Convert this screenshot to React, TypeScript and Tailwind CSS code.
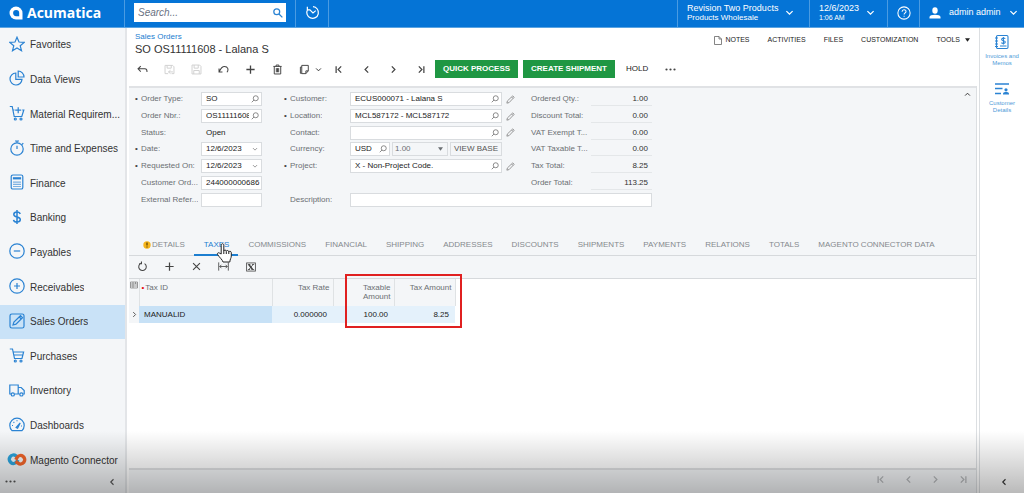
import { useState } from "react";
import type { ReactNode } from "react";

type IconProps = { className?: string; children: ReactNode; box?: string; sw?: number };

function Icon({ className = "size-3", children, box = "0 0 16 16", sw = 1.2 }: IconProps) {
  return (
    <svg viewBox={box} className={`shrink-0 ${className}`} fill="none" stroke="currentColor" strokeWidth={sw} aria-hidden="true">
      {children}
    </svg>
  );
}

const icons: Record<string, ReactNode> = {
  star: <path d="M8 1.2l2 4.8 5.2.4-4 3.3 1.3 5L8 12l-4.5 2.7 1.3-5-4-3.3L6 6z" />,
  pie: (
    <>
      <path d="M6.8 3A6 6 0 1 0 13 9.4H6.8z" />
      <path d="M9.2 1v6H15a6 6 0 0 0-5.8-6z" />
    </>
  ),
  cartPlus: (
    <>
      <path d="M0.8 1.5h2.4l2 10h7.6l2-6.5h-1.6M4 5h1.5" />
      <circle cx="6.3" cy="14" r="1" />
      <circle cx="12" cy="14" r="1" />
      <path d="M9.2 2.2v6M6.2 5.2h6" />
    </>
  ),
  timer: (
    <>
      <circle cx="8" cy="9" r="6.2" />
      <path d="M8 2.8V1M6 1h4M8 9V5.8M13 4.5l1.3-1.3" />
    </>
  ),
  calc: (
    <>
      <rect x="2.2" y="1" width="11.6" height="14" rx="1.6" />
      <path d="M4.5 3.8h7v1h-7z" />
      <path d="M5 7.5v5.5M7 7.5v5.5M9 7.5v5.5M11 7.5v5.5" strokeDasharray="1.2 1" />
    </>
  ),
  dollar: <path d="M8 1v14M11.200 5C10.800 3.600 9.600 3 8 3c-1.900 0-3.200.9-3.200 2.500 0 3.500 6.500 1.700 6.500 5.100 0 1.600-1.500 2.500-3.300 2.500s-3.200-.8-3.500-2.300" strokeWidth="1.500" />,
  minus: (
    <>
      <circle cx="8" cy="8" r="7.2" />
      <path d="M4.8 8h6.4" />
    </>
  ),
  plus: (
    <>
      <circle cx="8" cy="8" r="7.2" />
      <path d="M5 8h6M8 5v6" />
    </>
  ),
  edit: (
    <>
      <rect x="1" y="1" width="14" height="14" rx="1.8" />
      <path d="M4 12l.9-3 6.6-6.3 2 2L7 11.2zM10.3 4l2 2" />
    </>
  ),
  cart: (
    <>
      <path d="M.8 2h2.700l2 9.500h7.500l1.600-6.500H4.200M5 8h9" />
      <circle cx="6.300" cy="14" r="1" />
      <circle cx="12" cy="14" r="1" />
    </>
  ),
  truck: (
    <>
      <path d="M2.2 12H.8V3h8.4v9H5.4M9.2 12V5.5h3l3 3V12h-1M10.5 12H9.2" />
      <circle cx="3.8" cy="12.4" r="1.6" />
      <circle cx="12.4" cy="12.4" r="1.6" />
    </>
  ),
  gauge: (
    <>
      <path d="M3 13.6a7.2 7.2 0 1 1 10 0z" />
      <path d="M7.2 10.5l4-4.5-2.6 5.2z" />
      <path d="M3 8.5h1M4.5 5l.8.7M8 3.2v1M12 9h1" />
    </>
  ),
};

const navItems = [
  { label: "Favorites", icon: "star" },
  { label: "Data Views", icon: "pie" },
  { label: "Material Requirem...", icon: "cartPlus" },
  { label: "Time and Expenses", icon: "timer" },
  { label: "Finance", icon: "calc" },
  { label: "Banking", icon: "dollar" },
  { label: "Payables", icon: "minus" },
  { label: "Receivables", icon: "plus" },
  { label: "Sales Orders", icon: "edit" },
  { label: "Purchases", icon: "cart" },
  { label: "Inventory", icon: "truck" },
  { label: "Dashboards", icon: "gauge" },
  { label: "Magento Connector", icon: "magento" },
];

function Chevron({ dir, className = "size-2", bar = false }: { dir: "left" | "right" | "down" | "up"; className?: string; bar?: boolean }) {
  const d = {
    left: "M11 2.5L5.5 8l5.5 5.5",
    right: "M5 2.5L10.500 8 5 13.500",
    down: "M2.500 5.500L8 11l5.500-5.500",
    up: "M2.500 10.500L8 5l5.500 5.500",
  }[dir];
  return (
    <Icon className={className} sw={2.2}>
      <path d={d} />
      {bar && <path d={dir === "left" ? "M2 2v12" : "M14 2v12"} />}
    </Icon>
  );
}

function Lens({ className = "size-2" }: { className?: string }) {
  return (
    <Icon className={className} sw={1.7}>
      <circle cx="9.500" cy="6.500" r="5" />
      <path d="M6 10l-4.500 4.500" />
    </Icon>
  );
}

function NavIcon({ name }: { name: string }) {
  if (name === "magento") {
    return (
      <svg viewBox="0 0 20 13" className="h-[13px] w-5 shrink-0" fill="none" strokeWidth="3.400" aria-hidden="true">
        <path d="M11.500 4.500L9 2.900a4.200 4.200 0 1 0 .8 5.900l1.200-2" stroke="#2ba3dc" />
        <path d="M8.500 8.500l2.500 1.600a4.200 4.200 0 1 0-.8-5.900L8.800 6.800" stroke="#f0642a" />
      </svg>
    );
  }
  return <Icon className="size-4 text-[#2b83d3]">{icons[name]}</Icon>;
}

function TopBar() {
  return (
    <header className="flex h-7 shrink-0 items-stretch border-b border-[#5ba4e2] bg-[#0574d6] text-white">
      <a href="#home" className="flex w-[125px] shrink-0 items-center gap-1 border-r border-[#4a9be2] pb-[2px] pl-[9px]">
        <svg viewBox="0 0 14 14" className="size-[14px]" aria-hidden="true">
          <path d="M7 .5a6.500 6.500 0 0 1 6.500 6.500v6.500H7A6.500 6.500 0 0 1 7 .5z" fill="#fff" />
          <path d="M7.200 4a3 3 0 0 1 3 3v3.200h-3a3.100 3.100 0 0 1 0-6.200z" fill="#0574d6" />
        </svg>
        <span className="font-['Open_Sans','Noto_Sans',sans-serif] text-[14px] leading-5 font-bold">Acumatica</span>
      </a>
      <div className="flex w-[171px] items-center border-r border-[#4a9be2] pb-[2px] pl-[9px]">
        <label className="flex h-[19px] w-[152px] items-center bg-white pr-[3px] text-[#2b83d3]">
          <input aria-label="Search" placeholder="Search..." className="min-w-0 flex-1 px-1 text-[10px] text-gray-700 italic outline-none placeholder:text-gray-500" />
          <Icon className="size-[10px]" sw={2}>
            <circle cx="6" cy="6" r="4.700" />
            <path d="M9.500 9.500l5.500 5.500" />
          </Icon>
        </label>
      </div>
      <button aria-label="Recent" className="flex w-[33px] items-center justify-center border-r border-[#4a9be2] pb-[2px]">
        <Icon className="size-[15px]" sw={1.300}>
          <path d="M8.500 1.800a6.200 6.200 0 1 1-5.700 3M2.500 1.800v3.400h3.200M5 5l3.500 3.500L11.500 6" />
        </Icon>
      </button>
      <div className="flex-1" />
      <button className="flex w-[132px] items-center border-l border-[#4a9be2] pb-[2px] pl-[9px] text-left">
        <span>
          <span className="block text-[9px] leading-[10px]">Revision Two Products</span>
          <span className="block text-[8px] leading-[10px]">Products Wholesale</span>
        </span>
        <Chevron dir="down" className="ml-[7px] size-[9px]" />
      </button>
      <button className="flex w-[78px] items-center border-l border-[#4a9be2] pb-[2px] pl-[9px] text-left">
        <span>
          <span className="block text-[9px] leading-[10px]">12/6/2023</span>
          <span className="block text-[7px] leading-[10px]">1:06 AM</span>
        </span>
        <Chevron dir="down" className="ml-[7px] size-[9px]" />
      </button>
      <button aria-label="Help" className="flex w-8 items-center justify-center border-l border-[#4a9be2] pb-[2px]">
        <Icon className="size-[14px]">
          <circle cx="8" cy="8" r="7" />
          <path d="M5.800 6.500c0-3 4.500-2.800 4.500-.3 0 1.600-2.200 1.600-2.200 3.500M8.100 11v1.400" />
        </Icon>
      </button>
      <button className="flex w-[105px] items-center border-l border-[#4a9be2] pb-[2px] pl-[9px]">
        <svg viewBox="0 0 12 12" className="size-3" fill="currentColor" aria-hidden="true">
          <ellipse cx="6" cy="3.500" rx="2.700" ry="3.200" />
          <path d="M.5 11.500V10c0-1.500 2.500-2.300 5.500-2.300s5.500.8 5.500 2.300v1.500z" />
        </svg>
        <span className="ml-2 text-[9px]">admin admin</span>
        <Chevron dir="down" className="ml-2 size-[9px]" />
      </button>
    </header>
  );
}

function Sidebar() {
  return (
    <nav className="flex w-[125px] shrink-0 flex-col bg-[#f4f6f8]">
      {navItems.map((n) => (
        <a
          key={n.label}
          href={"#" + n.label}
          className={`flex flex-1 items-center gap-[5px] text-[10px] text-[#333] ${n.label === "Sales Orders" ? "bg-[#c9e2f7]" : ""}`}
        >
          <span className="flex w-[25px] justify-end pb-[3px] pl-[7px]">
            <span className="flex w-4 justify-center">
              <NavIcon name={n.icon} />
            </span>
          </span>
          <span className="truncate leading-4">{n.label}</span>
        </a>
      ))}
      <div className="flex h-[15px] items-start justify-between pr-[9px] pl-[5px] text-[#555]">
        <button aria-label="More" className="flex h-2 items-center">
          <Dots />
        </button>
        <button aria-label="Collapse menu" className="flex h-2 items-center">
          <Chevron dir="left" />
        </button>
      </div>
    </nav>
  );
}

function Dots() {
  return (
    <svg viewBox="0 0 11 3" className="h-[3px] w-[11px]" fill="currentColor" aria-hidden="true">
      <circle cx="1.500" cy="1.500" r="1.100" />
      <circle cx="5.500" cy="1.500" r="1.100" />
      <circle cx="9.500" cy="1.500" r="1.100" />
    </svg>
  );
}

function ToolButton({ label, children, faded = false }: { label: string; children: ReactNode; faded?: boolean }) {
  return (
    <button aria-label={label} disabled={faded} className={`flex h-5 w-[27px] shrink-0 items-center justify-center ${faded ? "text-[#d0d0d0]" : "text-[#444]"}`}>
      {children}
    </button>
  );
}

function PageHead() {
  return (
    <div className="h-[58px] shrink-0">
      <div className="flex justify-between">
        <div className="pt-1 pl-[6px]">
          <a href="#orders" className="block text-[8px] leading-[10px] text-[#1c7ed0]">
            Sales Orders
          </a>
          <h1 className="text-[11px] leading-[14px] text-[#333]">SO OS11111608 - Lalana S</h1>
        </div>
        <div className="flex h-6 items-center gap-[18px] pr-[9px] text-[7px] text-[#222]">
          <button className="flex items-center gap-[3px]">
            <svg viewBox="0 0 8 9" className="h-[9px] w-2" fill="none" stroke="#666" strokeWidth=".8" aria-hidden="true">
              <path d="M.5.5h4.500l2.500 2.500v5.500h-7zM5 .5V3h2.500" />
            </svg>
            NOTES
          </button>
          <button>ACTIVITIES</button>
          <button>FILES</button>
          <button>CUSTOMIZATION</button>
          <button className="flex items-center gap-[5px]">
            TOOLS
            <Caret />
          </button>
        </div>
      </div>
      <div className="flex items-center pt-[3px]">
        <ToolButton label="Back">
          <Icon className="size-[11px]" sw={1.500}>
            <path d="M5.500 3L1.500 7l4 4M1.500 7h10c2 0 3 1.200 3 3.500v1" />
          </Icon>
        </ToolButton>
        <ToolButton label="Save and close" faded>
          <Icon className="size-[11px]" sw={1.400}>
            <path d="M6 14H1.500V2h11L14.500 4v10H11M4.500 2v4h6V2M9.500 9l-3 2.500 3 2.500M6.500 11.500H13" />
          </Icon>
        </ToolButton>
        <ToolButton label="Save" faded>
          <Icon className="size-[11px]" sw={1.400}>
            <path d="M1.500 1.500h11l2 2v11h-13zM4.500 1.500v4.500h6V1.500M4 14.500V9.500h8v5" />
          </Icon>
        </ToolButton>
        <ToolButton label="Undo">
          <Icon className="size-[11px]" sw={1.500}>
            <path d="M1.500 6.500v5h5M2 11C4 6 6.500 3.500 9.500 3.500c5 0 6.300 5 3.500 8.500" />
          </Icon>
        </ToolButton>
        <ToolButton label="Add">
          <Icon className="size-[11px]" sw={1.900}>
            <path d="M8 2v12M2 8h12" />
          </Icon>
        </ToolButton>
        <ToolButton label="Delete">
          <Icon className="size-[11px]" sw={1.400}>
            <path d="M2 3.500h12M6 3.500v-2h4v2M3.300 3.500v11h9.400v-11M6.300 6v6M8 6v6M9.700 6v6" />
          </Icon>
        </ToolButton>
        <ToolButton label="Copy and paste">
          <Icon className="size-[11px]" sw={1.400}>
            <path d="M4 2h9.500v8L10 14H4zM13.500 10H10v4M4 4.500H2v9h2" />
          </Icon>
        </ToolButton>
        <button aria-label="Copy options" className="-ml-1 flex h-5 w-2 items-center justify-center text-[#333]">
          <Chevron dir="down" className="size-[7px]" />
        </button>
        <span className="w-1" />
        <ToolButton label="First record"><Chevron dir="left" bar className="size-[9px]" /></ToolButton>
        <ToolButton label="Previous record"><Chevron dir="left" className="size-[9px]" /></ToolButton>
        <ToolButton label="Next record"><Chevron dir="right" className="size-[9px]" /></ToolButton>
        <ToolButton label="Last record"><Chevron dir="right" bar className="size-[9px]" /></ToolButton>
        <button className="ml-px h-[18px] w-[83px] bg-[#1f9743] text-[8px] font-bold whitespace-nowrap text-white">QUICK PROCESS</button>
        <button className="ml-[5px] h-[18px] w-[92px] bg-[#1f9743] text-[8px] font-bold whitespace-nowrap text-white">CREATE SHIPMENT</button>
        <button className="ml-[11px] text-[8px] text-[#222]">HOLD</button>
        <button aria-label="More actions" className="ml-[17px] text-[#444]">
          <Dots />
        </button>
      </div>
    </div>
  );
}

function Caret() {
  return (
    <svg viewBox="0 0 6 4" className="h-1 w-[5px] shrink-0" fill="currentColor" aria-hidden="true">
      <path d="M0 0h6L3 4z" />
    </svg>
  );
}

const rowStart = ["row-start-1", "row-start-2", "row-start-3", "row-start-4", "row-start-5", "row-start-6", "row-start-7"];

function FieldLabel({ id, text, required }: { id: string; text: string; required?: boolean }) {
  return (
    <label htmlFor={id} className="flex w-[66px] shrink-0 items-center text-[#6b6f73]">
      <span className="w-[6px] text-[#444]">{required ? "•" : ""}</span>
      <span className="truncate">{text}</span>
    </label>
  );
}

function FieldBox({ id, value, icon, className = "flex-1" }: { id: string; value: string; icon?: "lens" | "down"; className?: string }) {
  const [text, setText] = useState(value);
  return (
    <span className={`flex h-[14px] min-w-0 items-center border border-[#d9dcdf] bg-white text-[#222] ${className}`}>
      <input id={id} value={text} onChange={(e) => setText(e.target.value)} className="h-3 min-w-0 flex-1 pl-1 outline-none" />
      {icon === "lens" && <Lens className="mx-[2px] size-2 text-[#777]" />}
      {icon === "down" && <Chevron dir="down" className="mx-[3px] size-[6px] text-[#888]" />}
    </span>
  );
}

type Field = { label: string; value: string; required?: boolean; icon?: "lens" | "down" };

const orderFields: Field[] = [
  { label: "Order Type:", value: "SO", required: true, icon: "lens" },
  { label: "Order Nbr.:", value: "OS11111608", icon: "lens" },
  { label: "Status:", value: "Open" },
  { label: "Date:", value: "12/6/2023", required: true, icon: "down" },
  { label: "Requested On:", value: "12/6/2023", required: true, icon: "down" },
  { label: "Customer Ord...", value: "244000000686" },
  { label: "External Refer...", value: "" },
];

const customerFields: Field[] = [
  { label: "Customer:", value: "ECUS000071 - Lalana S", required: true },
  { label: "Location:", value: "MCL587172 - MCL587172", required: true },
  { label: "Contact:", value: "" },
  { label: "Currency:", value: "USD" },
  { label: "Project:", value: "X - Non-Project Code.", required: true },
];

const totals = [
  ["Ordered Qty.:", "1.00"],
  ["Discount Total:", "0.00"],
  ["VAT Exempt T...", "0.00"],
  ["VAT Taxable T...", "0.00"],
  ["Tax Total:", "8.25"],
  ["Order Total:", "113.25"],
];

function OrderForm() {
  return (
    <form className="flex h-[148px] shrink-0 items-start justify-between border-t-2 border-[#e0e2e5] pt-[3px] pl-[6px] text-[8px]">
      <div className="grid h-[117px] grid-cols-[149px_246px_122px] grid-rows-7 items-center">
        {orderFields.map((f, i) => (
          <div key={f.label} className={`col-start-1 flex items-center pr-[22px] ${rowStart[i]}`}>
            <FieldLabel id={"order-" + i} text={f.label} required={f.required} />
            {f.label === "Status:" ? (
              <output id={"order-" + i} className="pl-[5px] text-[#222]">{f.value}</output>
            ) : (
              <FieldBox id={"order-" + i} value={f.value} icon={f.icon} />
            )}
          </div>
        ))}
        {customerFields.map((f, i) => (
          <div key={f.label} className={`col-start-2 flex items-center ${rowStart[i]}`}>
            <FieldLabel id={"customer-" + i} text={f.label} required={f.required} />
            {f.label === "Currency:" ? (
              <div className="flex w-[152px] gap-[2px]">
                <FieldBox id={"customer-" + i} value={f.value} icon="lens" className="w-10" />
                <span className="flex h-[14px] flex-1 items-center border border-[#d9dcdf] pr-1 text-[#6b6f73]">
                  <select aria-label="Exchange rate" className="min-w-0 flex-1 appearance-none pl-[2px] outline-none">
                    <option>1.00</option>
                  </select>
                  <Caret />
                </span>
                <button type="button" className="h-[14px] w-[52px] border border-[#d9dcdf] whitespace-nowrap text-[#555]">VIEW BASE</button>
              </div>
            ) : (
              <>
                <FieldBox id={"customer-" + i} value={f.value} icon="lens" className="w-[152px]" />
                <button type="button" aria-label={"Edit " + f.label} className="ml-1 text-[#777]">
                  <Icon className="size-[9px]" sw={1.300}>
                    <path d="M1.500 14.500l1-4L12 1.500l2.500 2.500L5.500 13.500zM10 3.500L12.500 6" />
                  </Icon>
                </button>
              </>
            )}
          </div>
        ))}
        {totals.map(([label, value], i) => (
          <div key={label} className={`col-start-3 flex h-[14px] items-center ${rowStart[i]}`}>
            <span className="w-[61px] truncate pl-px text-[#6b6f73]">{label}</span>
            <output className="h-[14px] flex-1 border-b border-[#e4e7e9] pr-1 text-right leading-[14px] text-[#333]">{value}</output>
          </div>
        ))}
        <div className="col-span-2 col-start-2 row-start-7 flex items-center">
          <FieldLabel id="description" text="Description:" />
          <FieldBox id="description" value="" />
        </div>
      </div>
      <button type="button" aria-label="Collapse form" className="mr-[5px] text-[#333]">
        <Chevron dir="up" className="size-[7px]" />
      </button>
    </form>
  );
}

const tabs = ["DETAILS", "TAXES", "COMMISSIONS", "FINANCIAL", "SHIPPING", "ADDRESSES", "DISCOUNTS", "SHIPMENTS", "PAYMENTS", "RELATIONS", "TOTALS", "MAGENTO CONNECTOR DATA"];

function Tabs() {
  return (
    <div role="tablist" className="flex h-[22px] shrink-0 items-stretch border-b border-[#d6d9dc] pl-[14px] text-[8px] text-[#85898d]">
      {tabs.map((t) => (
        <button
          key={t}
          role="tab"
          aria-selected={t === "TAXES"}
          className={
            t === "TAXES"
              ? "relative -mb-px border-b-2 border-[#1c7ed0] pt-px pr-[9px] pl-[10px] whitespace-nowrap text-[#1c7ed0]"
              : t === "DETAILS"
                ? "flex items-center gap-px pr-[9px] whitespace-nowrap"
                : "pr-[9px] pl-[10px] whitespace-nowrap"
          }
        >
          {t === "DETAILS" && (
            <svg viewBox="0 0 8 8" className="size-2" aria-hidden="true">
              <circle cx="4" cy="4" r="3.700" fill="#f5b51c" />
              <path d="M4 1.500v3M4 5.500v1" stroke="#4a3300" strokeWidth="1.100" />
            </svg>
          )}
          {t}
          {t === "TAXES" && (
            <svg viewBox="0 0 18 20" className="absolute top-[9px] left-[22px] z-10 h-[20px] w-[18px]" fill="#fff" stroke="#222" strokeWidth="1" strokeLinejoin="round" aria-hidden="true">
              <path d="M5.200 11V2.200c0-2 2.600-2 2.600 0V8c.2-1.400 2.500-1.200 2.500.3.300-1.300 2.500-1 2.500.6.400-1.100 2.500-.8 2.500.8V13c0 2-1.300 3-1.500 6H7c-.3-2-3.500-4.500-5.300-7.300-1-1.700.8-2.500 2-1.500z" />
              <path d="M7.800 8v3M10.300 8.500V11M12.800 9v2" fill="none" />
            </svg>
          )}
        </button>
      ))}
    </div>
  );
}

function GridToolbar() {
  return (
    <div className="flex h-[22px] shrink-0 items-center pb-px">
      <ToolButton label="Refresh">
        <Icon className="size-[11px]" sw={1.500}>
          <path d="M6 3.300a5.500 5.500 0 1 0 5 .5M6.500.8V4H3" />
        </Icon>
      </ToolButton>
      <ToolButton label="Add row">
        <Icon className="size-[11px]" sw={1.800}>
          <path d="M8 2v12M2 8h12" />
        </Icon>
      </ToolButton>
      <ToolButton label="Delete row">
        <Icon className="size-[11px]" sw={1.600}>
          <path d="M3 3l10 10M13 3L3 13" />
        </Icon>
      </ToolButton>
      <ToolButton label="Fit columns">
        <Icon className="size-[11px]" sw={1.200}>
          <path d="M1 2v12M15 2v12M2.500 8h11M5 5.500L2.500 8 5 10.500M11 5.500L13.500 8 11 10.500" />
        </Icon>
      </ToolButton>
      <ToolButton label="Export to Excel">
        <Icon className="size-[10px]" sw={1.300}>
          <rect x="1" y="1.500" width="14" height="13" />
          <path d="M4.500 4l6 8" strokeWidth="2.600" />
          <path d="M11.500 4l-7 8M3 4h4M9.500 4H13M3 12h3.500M9 12h4" />
        </Icon>
      </ToolButton>
    </div>
  );
}

function TaxGrid() {
  return (
    <div className="relative flex-1 border-t border-[#d6d9dc] bg-white">
      <table className="w-[326px] table-fixed border-collapse text-[8px] leading-[9px]">
        <thead>
          <tr className="h-[27px] bg-[#f4f6f8] align-top text-[#6b6f73]">
            <th className="w-[10px] border-r border-[#dfe2e4] pt-[2px]">
              <Icon className="mx-auto size-2 text-[#777]" sw={1.400}>
                <path d="M1 2h14v12H1zM1 6h14M1 10h14M6 2v12M11 2v4" />
              </Icon>
            </th>
            <th className="w-[133px] border-r border-[#dfe2e4] pt-1 pl-[2px] text-left font-normal">
              <span className="mr-px text-red-600">•</span>Tax ID
            </th>
            <th className="w-[61px] border-r border-[#dfe2e4] pt-1 pr-[3px] text-right font-normal">Tax Rate</th>
            <th className="w-[61px] border-r border-[#dfe2e4] pt-1 pr-[3px] pl-3 text-right font-normal">Taxable Amount</th>
            <th className="w-[61px] border-r border-[#dfe2e4] pt-1 pr-[3px] text-right font-normal whitespace-nowrap">Tax Amount</th>
          </tr>
        </thead>
        <tbody>
          <tr className="h-[17px] bg-[#e4f1fb] text-[#222]">
            <td className="bg-[#f4f6f8] text-[#555]">
              <Chevron dir="right" className="mx-auto size-[7px]" />
            </td>
            <td className="bg-[#c7e1f6] pl-[5px]">MANUALID</td>
            <td className="pr-[6px] text-right">0.000000</td>
            <td className="pr-[6px] text-right">100.00</td>
            <td className="pr-[6px] text-right">8.25</td>
          </tr>
        </tbody>
      </table>
      <div className="pointer-events-none absolute -top-[5px] left-[216px] h-[54px] w-[117px] border-2 border-[#e02020]" />
    </div>
  );
}

function SidePanel() {
  return (
    <aside className="flex w-[45px] shrink-0 flex-col items-center border-l border-[#dcdfe2] bg-white pt-[6px] text-center text-[6px] leading-[7px] text-[#4f9bd8]">
      <a href="#invoices" className="flex flex-col items-center gap-[3px]">
        <Icon className="size-4 text-[#2b83d3]" sw={1.100}>
          <rect x="2.500" y="1.500" width="11.500" height="13" rx="1.200" />
          <path d="M1 4h3M1 7h3M1 10h3M1 12.500h3M6 12h6.500" />
          <path d="M11.200 4.800c-.8-1.200-3.600-.9-3.600.7 0 1.700 3.700.9 3.700 2.600 0 1.600-3 1.700-3.900.5M9.400 3v7.500" />
        </Icon>
        <span>Invoices and<br />Memos</span>
      </a>
      <a href="#customer" className="mt-[14px] flex flex-col items-center gap-[3px]">
        <Icon className="size-4 text-[#2b83d3]" sw={1.300}>
          <path d="M1 3h14M1 7.500h7.500M1 12.500h6" />
          <circle cx="12" cy="8.800" r="1.600" fill="currentColor" stroke="none" />
          <path d="M9 13.500v-1c0-2 6-2 6 0v1z" fill="currentColor" stroke="none" />
        </Icon>
        <span>Customer<br />Details</span>
      </a>
      <button aria-label="Expand panel" className="mt-auto mb-[7px] ml-1 text-[#333]">
        <Chevron dir="left" />
      </button>
    </aside>
  );
}

export default function App() {
  return (
    <div className="relative flex min-h-screen flex-col bg-white font-['Liberation_Sans',Arial,sans-serif]">
      <TopBar />
      <div className="flex flex-1 items-stretch">
        <Sidebar />
        <main className="flex min-w-0 flex-1 flex-col border-l-2 border-[#e3e5e8] pl-[2px]">
          <PageHead />
          <section className="mr-[2px] flex flex-1 flex-col border-r border-[#dcdfe2] bg-[#f4f6f8]">
            <OrderForm />
            <Tabs />
            <GridToolbar />
            <TaxGrid />
            <footer className="flex h-[25px] shrink-0 items-center justify-end border-t-2 border-[#dfe1e3] pb-1">
              <ToolButton label="First page" faded><Chevron dir="left" bar className="size-[9px] text-[#b5b7ba]" /></ToolButton>
              <ToolButton label="Previous page" faded><Chevron dir="left" className="size-[9px] text-[#b5b7ba]" /></ToolButton>
              <ToolButton label="Next page" faded><Chevron dir="right" className="size-[9px] text-[#b5b7ba]" /></ToolButton>
              <ToolButton label="Last page" faded><Chevron dir="right" bar className="size-[9px] text-[#b5b7ba]" /></ToolButton>
            </footer>
          </section>
        </main>
        <SidePanel />
      </div>
      <div className="pointer-events-none absolute inset-x-0 bottom-0 h-[62px] bg-linear-to-t from-black/27 to-transparent" />
    </div>
  );
}
